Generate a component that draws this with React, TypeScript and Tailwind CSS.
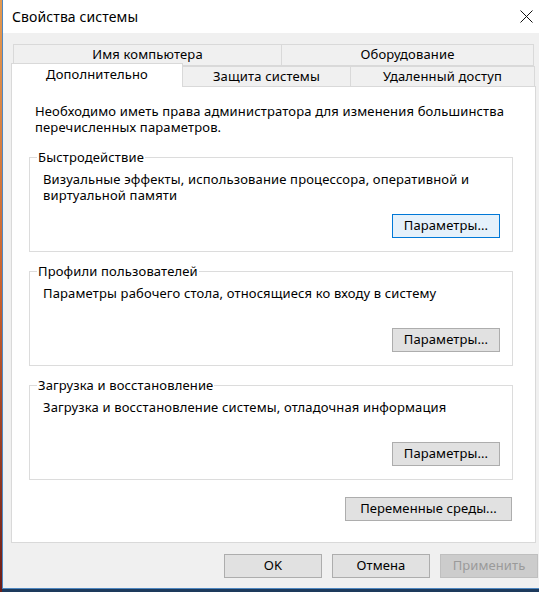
import type { ReactNode } from 'react'

const font = { fontFamily: '"Noto Sans", "Liberation Sans", sans-serif' }

function WinButton({
  children,
  width,
  focused,
  disabled,
}: {
  children: ReactNode
  width: string
  focused?: boolean
  disabled?: boolean
}) {
  const tone = disabled
    ? 'bg-[#cccccc] border-[#bfbfbf] text-[#9a9a9a]'
    : focused
      ? 'bg-[#e5f1fb] border-[#0078d7] text-black'
      : 'bg-[#e1e1e1] border-[#adadad] text-black'
  return (
    <div className={`${width} h-[24px] border flex items-center justify-center text-[13px] tracking-[0.1px] ${tone}`}>
      {children}
    </div>
  )
}

function GroupBox({
  title,
  desc,
  focused,
}: {
  title: string
  desc: ReactNode
  focused?: boolean
}) {
  return (
    <div className="w-[484px] h-[95px] border border-[#dcdcdc] flex flex-col">
      <span className="self-start -mt-[9px] ml-[7px] px-[1px] bg-white text-[13px] tracking-[0.15px] leading-[16px]">
        {title}
      </span>
      <p className="text-[13px] tracking-[0.15px] leading-[16px] mt-[6px] pl-[13px] flex-1">{desc}</p>
      <div className="flex justify-end pr-[12px] pb-[13px]">
        <WinButton width="w-[108px]" focused={focused}>Параметры...</WinButton>
      </div>
    </div>
  )
}

export default function App() {
  return (
    <div className="w-[539px] h-[592px] overflow-hidden flex bg-[#1d3a5c]" style={font}>
      {/* полоска рабочего стола слева */}
      <div className="w-[2px] h-full shrink-0 bg-gradient-to-b from-[#e39a52] via-[#c8602d] to-[#6b1e1a]" />

      <div className="w-[546px] h-[589px] shrink-0 border-l border-b border-[#4f87c0] flex flex-col bg-[#f0f0f0]">
        {/* заголовок окна */}
        <div className="h-[33px] bg-white flex items-center justify-between pl-[9px] pr-[14px]">
          <span className="text-[14px] tracking-[0.1px] text-black">Свойства системы</span>
          <svg width="13" height="13" viewBox="0 0 13 13" className="mr-[1px]">
            <path d="M0.5 0.5 L12.5 12.5 M12.5 0.5 L0.5 12.5" stroke="#111" strokeWidth="1" />
          </svg>
        </div>

        <div className="flex flex-col pl-[8px] pt-[11px]">
          {/* вкладки */}
          <div className="flex ml-[2px] text-[13px] tracking-[0.15px]">
            <div className="w-[269px] h-[22px] border border-[#d9d9d9] flex items-center justify-center">
              Имя компьютера
            </div>
            <div className="w-[252px] h-[22px] border border-l-0 border-[#d9d9d9] flex items-center justify-center">
              Оборудование
            </div>
          </div>
          <div className="flex items-end -mt-[3px] text-[13px] tracking-[0.15px] relative z-10">
            <div className="w-[172px] h-[24px] bg-white border border-b-0 border-[#d9d9d9] flex items-center justify-center pb-[1px]">
              Дополнительно
            </div>
            <div className="w-[168px] h-[21px] border border-l-0 border-b-0 border-[#d9d9d9] flex items-center justify-center">
              Защита системы
            </div>
            <div className="w-[184px] h-[21px] border border-l-0 border-b-0 border-[#d9d9d9] flex items-center justify-center">
              Удаленный доступ
            </div>
          </div>

          {/* панель вкладки */}
          <div className="w-[525px] h-[457px] bg-white border border-[#d9d9d9] -mt-px pl-[17px] flex flex-col">
            <p className="text-[13px] tracking-[0.15px] leading-[16px] pl-[6px] mt-[16px]">
              Необходимо иметь права администратора для изменения большинства
              <br />
              перечисленных параметров.
            </p>

            <div className="mt-[22px] flex flex-col gap-[19px]">
              <GroupBox
                title="Быстродействие"
                focused
                desc={
                  <>
                    Визуальные эффекты, использование процессора, оперативной и
                    <br />
                    виртуальной памяти
                  </>
                }
              />
              <GroupBox
                title="Профили пользователей"
                desc="Параметры рабочего стола, относящиеся ко входу в систему"
              />
              <GroupBox
                title="Загрузка и восстановление"
                desc="Загрузка и восстановление системы, отладочная информация"
              />
            </div>

            <div className="flex justify-end w-[484px] mt-[17px] pr-[1px]">
              <WinButton width="w-[167px]">Переменные среды...</WinButton>
            </div>
          </div>

          {/* кнопки диалога */}
          <div className="flex gap-[10px] pl-[213px] mt-[11px]">
            <WinButton width="w-[98px]">OK</WinButton>
            <WinButton width="w-[98px]">Отмена</WinButton>
            <WinButton width="w-[98px]" disabled>Применить</WinButton>
          </div>
        </div>
      </div>
    </div>
  )
}
